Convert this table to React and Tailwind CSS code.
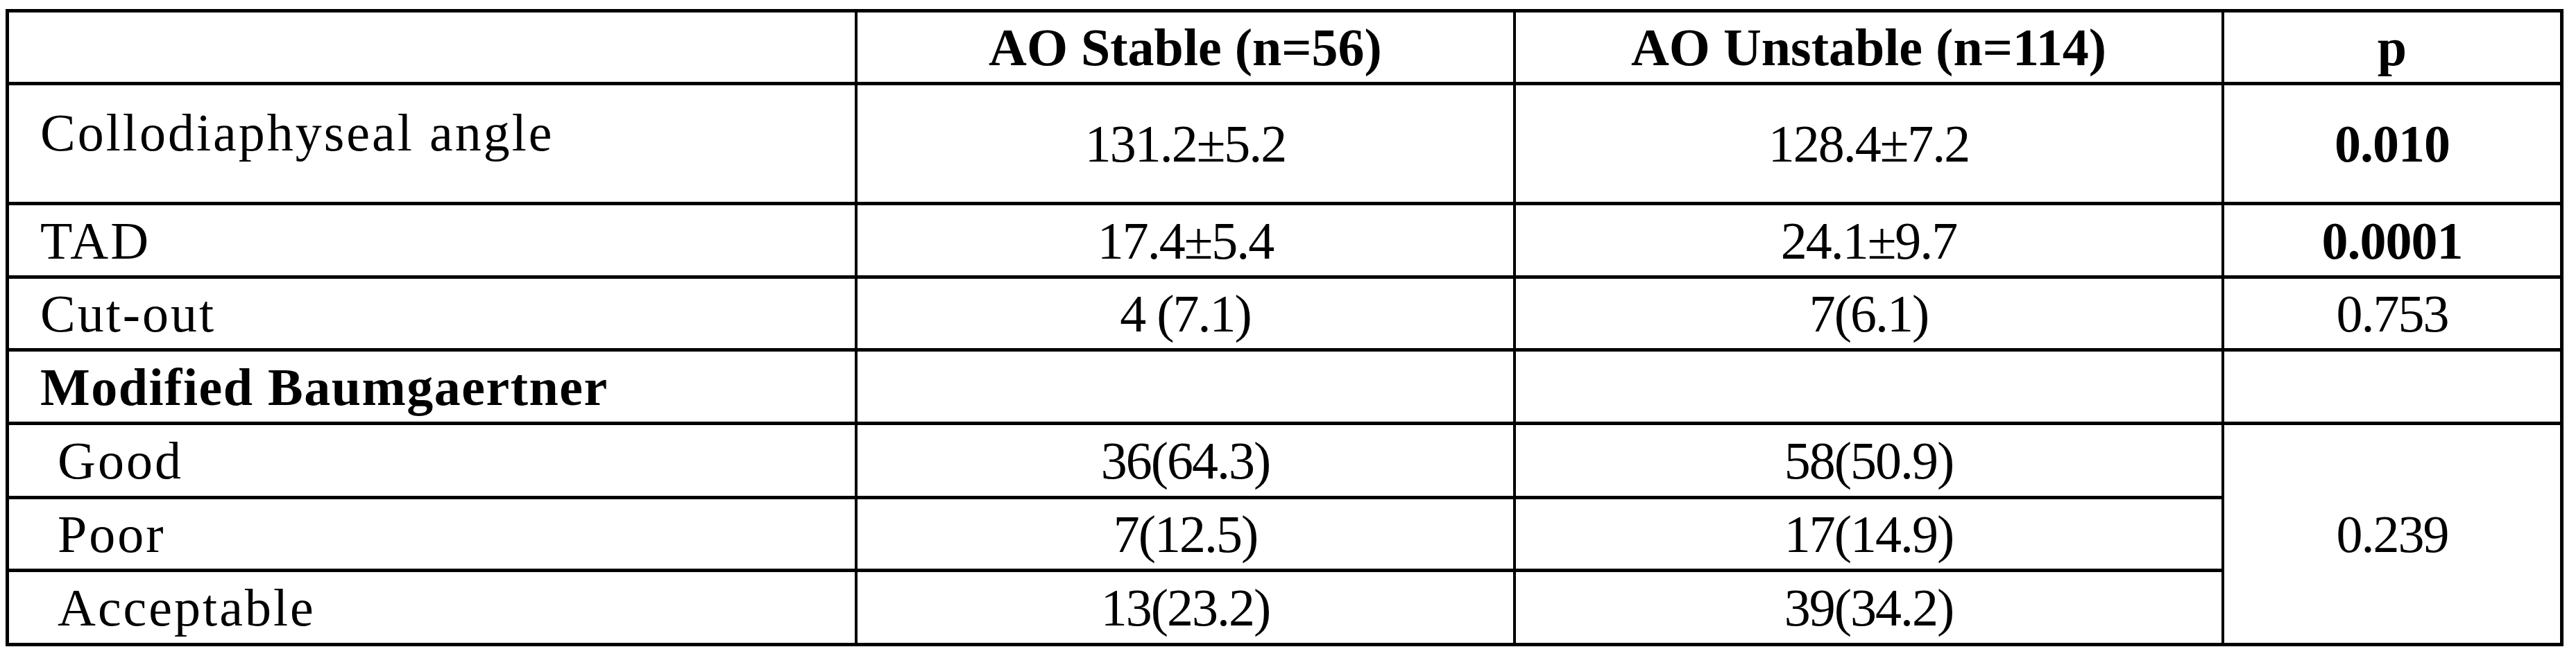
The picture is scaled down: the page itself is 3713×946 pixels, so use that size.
import React from 'react'

const serif = "font-['Liberation_Serif',serif] text-[76px] leading-none text-black"

function Cell({ children, className = '' }) {
  return (
    <div className={`bg-white flex items-center justify-center ${className}`}>
      {children}
    </div>
  )
}

function Label({ children, indent = false, bold = false, top = false }) {
  return (
    <div
      className={`bg-white flex ${top ? 'items-start pt-[30px]' : 'items-center'} ${indent ? 'pl-[70px]' : 'pl-[45px]'} ${bold ? 'font-bold tracking-[1.5px]' : 'tracking-[3px]'}`}
    >
      {children}
    </div>
  )
}

const Num = ({ children, bold = false }) => (
  <Cell className={bold ? 'font-bold tracking-[-1px]' : 'tracking-[-2px]'}>{children}</Cell>
)

export default function App() {
  return (
    <div className="bg-white w-[3713px] h-[946px] pt-[13px] pl-[8px]">
      <div
        className={`${serif} grid w-fit grid-cols-[1219px_945px_1017px_484px] grid-rows-[100px_168px_101px_100px_101px_102px_100px_102px] gap-x-[4px] gap-y-[5px] bg-black p-[5px]`}
      >
        {/* header */}
        <Cell />
        <Cell className="font-bold">AO Stable (n=56)</Cell>
        <Cell className="font-bold">AO Unstable (n=114)</Cell>
        <Cell className="font-bold">p</Cell>

        <Label top>Collodiaphyseal angle</Label>
        <Num>131.2±5.2</Num>
        <Num>128.4±7.2</Num>
        <Num bold>0.010</Num>

        <Label>TAD</Label>
        <Num>17.4±5.4</Num>
        <Num>24.1±9.7</Num>
        <Num bold>0.0001</Num>

        <Label>Cut-out</Label>
        <Num>4 (7.1)</Num>
        <Num>7(6.1)</Num>
        <Num>0.753</Num>

        <Label bold>Modified Baumgaertner</Label>
        <Cell />
        <Cell />
        <Cell />

        <Label indent>Good</Label>
        <Num>36(64.3)</Num>
        <Num>58(50.9)</Num>
        <Cell className="row-span-3 tracking-[-2px]">0.239</Cell>

        <Label indent>Poor</Label>
        <Num>7(12.5)</Num>
        <Num>17(14.9)</Num>

        <Label indent>Acceptable</Label>
        <Num>13(23.2)</Num>
        <Num>39(34.2)</Num>
      </div>
    </div>
  )
}
